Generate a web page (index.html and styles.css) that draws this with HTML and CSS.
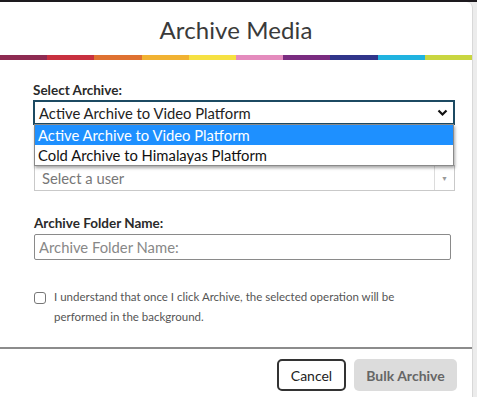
FILE: index.html
```html
<!DOCTYPE html>
<html lang="en">
<head>
  <meta charset="UTF-8" />
  <title>Archive Media</title>
  <link rel="stylesheet" href="styles.css">
</head>
<body>

<div class="modal">
  <header class="modal-head">
    <h1>Archive Media</h1>
  </header>

  <div class="rainbow">
    <span class="c1"></span><span class="c2"></span><span class="c3"></span><span class="c4"></span><span class="c5"></span>
    <span class="c6"></span><span class="c7"></span><span class="c8"></span><span class="c9"></span><span class="c10"></span>
  </div>

  <div class="modal-body">
    <div class="field field-archive">
      <div class="field-label">Select Archive:</div>
      <div class="picker">
        <div class="picker-box">
          <span>Active Archive to Video Platform</span>
          <svg class="chevron" width="11" height="8" viewBox="0 0 11 8">
            <path d="M1.5 1.5 L5.5 5.5 L9.5 1.5" fill="none" stroke="#111" stroke-width="2.2" />
          </svg>
        </div>
        <ul class="picker-menu">
          <li class="active">Active Archive to Video Platform</li>
          <li>Cold Archive to Himalayas Platform</li>
        </ul>
      </div>
    </div>

    <div class="field field-user">
      <div class="user-select">
        <span class="placeholder">Select a user</span>
        <span class="caret">&#9660;</span>
      </div>
    </div>

    <div class="field field-folder">
      <div class="field-label">Archive Folder Name:</div>
      <input class="text-input" type="text" placeholder="Archive Folder Name:" />
    </div>

    <label class="confirm">
      <span class="checkbox"></span>
      <span class="confirm-text">I understand that once I click Archive, the selected operation will be performed in the background.</span>
    </label>
  </div>

  <footer class="modal-foot">
    <button class="btn btn-cancel">Cancel</button>
    <button class="btn btn-archive" disabled>Bulk Archive</button>
  </footer>
</div>

</body>
</html>
```

FILE: styles.css
```css
* {
  margin: 0;
  padding: 0;
  box-sizing: border-box;
}
body {
  font-family: Lato, 'Open Sans', sans-serif;
  background: #ececec;
  border-top: 2px solid #1d1a1e;
  color: #333;
  width: 477px;
  height: 397px;
  overflow: hidden;
}

.modal {
  width: 473px;
  height: 395px;
  background: #fff;
  border-right: 1px solid #d8d8d8;
  border-top-right-radius: 6px;
}

.modal-head {
  height: 53px;
  padding-top: 2px;
  display: flex;
  align-items: center;
  justify-content: center;
}
.modal-head h1 {
  font-size: 24px;
  font-weight: 400;
  color: #3a3a3a;
  letter-spacing: 0.1px;
}

.rainbow {
  display: flex;
  height: 5px;
}
.rainbow span {
  flex: 1;
}
.c1  { background: #8e2b52; }
.c2  { background: #c8303f; }
.c3  { background: #df7131; }
.c4  { background: #f1b232; }
.c5  { background: #f6e142; }
.c6  { background: #e48bbd; }
.c7  { background: #7a2c80; }
.c8  { background: #30358a; }
.c9  { background: #20b3e0; }
.c10 { background: #c9d640; }

.modal-body {
  padding: 21px 18px 0 33px;
  height: 287px;
}

.field-label {
  font-size: 13.5px;
  font-weight: 700;
  color: #2a2a2a;
  line-height: 18px;
  margin-bottom: 1px;
}

.picker {
  position: relative;
}
.picker-box {
  height: 25px;
  width: 422px;
  border: 2px solid #1c4a62;
  display: flex;
  align-items: center;
  justify-content: space-between;
  padding: 0 5px 0 4px;
  font-size: 14.8px;
  color: #222;
}
.chevron {
  margin-top: 1px;
}
.picker-menu {
  position: absolute;
  top: 24px;
  left: 1px;
  width: 420px;
  list-style: none;
  background: #fff;
  border: 1px solid #8a8a8a;
  box-shadow: 1px 2px 3px rgba(0,0,0,0.35);
  z-index: 2;
}
.picker-menu li {
  height: 20px;
  line-height: 20px;
  padding-left: 3px;
  font-size: 14.8px;
  color: #111;
}
.picker-menu li.active {
  background: #1e90ff;
  color: #fff;
}

.field-user {
  margin-top: 40px;
}
.user-select {
  width: 421px;
  height: 26px;
  margin-left: 1px;
  border: 1px solid #c9c9c9;
  display: flex;
  align-items: center;
}
.placeholder {
  flex: 1;
  padding-left: 7px;
  font-size: 14.8px;
  color: #777;
}
.caret {
  width: 20px;
  height: 100%;
  border-left: 1px solid #dcdcdc;
  font-size: 7px;
  color: #999;
  display: flex;
  align-items: center;
  justify-content: center;
}

.field-folder {
  margin-top: 23px;
  padding-left: 1px;
}
.text-input {
  display: block;
  width: 417px;
  height: 26px;
  margin-top: 2px;
  border: 1px solid #8a8a8a;
  border-radius: 2px;
  padding: 0 4px;
  font-family: inherit;
  font-size: 14.8px;
}
.text-input::placeholder {
  color: #888;
}

.confirm {
  display: flex;
  align-items: flex-start;
  margin-top: 29px;
  padding-left: 1px;
}
.checkbox {
  flex: none;
  width: 12px;
  height: 12px;
  margin-top: 3px;
  border: 1px solid #777;
  border-radius: 3px;
}
.confirm-text {
  margin-left: 8px;
  font-size: 11.5px;
  line-height: 20px;
  color: #555;
  width: 380px;
  margin-top: -2px;
}

.modal-foot {
  border-top: 2px solid #8c8c8c;
  display: flex;
  justify-content: flex-end;
  gap: 8px;
  padding: 10px 15px 0 0;
}
.btn {
  height: 32px;
  border-radius: 5px;
  font-family: inherit;
  font-size: 14px;
  padding: 0;
  white-space: nowrap;
}
.btn-cancel {
  width: 69px;
  background: #fff;
  border: 2px solid #333;
  color: #222;
}
.btn-archive {
  width: 103px;
  background: #dcdcdc;
  border: none;
  color: #666;
  font-weight: 700;
}
```
